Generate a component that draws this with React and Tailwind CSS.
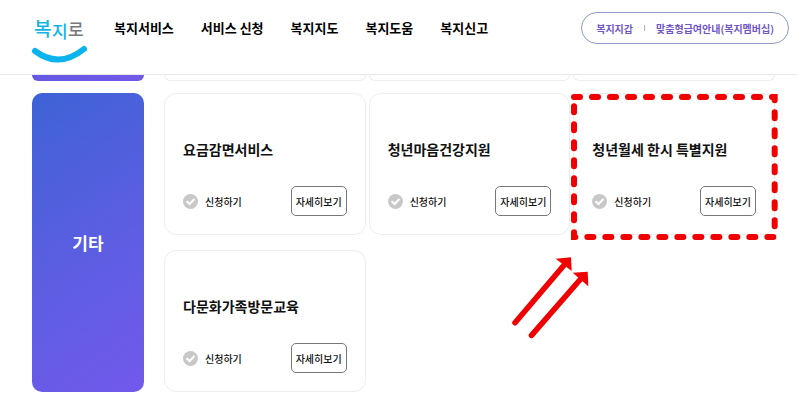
const MENU = ["복지서비스", "서비스 신청", "복지지도", "복지도움", "복지신고"];

const SERVICES = [
  { id: "discount", title: "요금감면서비스" },
  { id: "mind", title: "청년마음건강지원" },
  { id: "rent", title: "청년월세 한시 특별지원", highlighted: true },
  { id: "multicultural", title: "다문화가족방문교육" },
];

export default function App() {
  return (
    <div className="bg-white text-[#111] font-['Noto_Sans_CJK_KR',sans-serif]">
      <Header />
      <main className="pl-8 pr-[22px] pb-2">
        <PreviousCategory />
        <section className="mt-3 flex gap-5">
          <h2 className="flex w-28 shrink-0 items-center justify-center rounded-[10px] bg-linear-145 from-[#3d62d6] to-[#7259ec] text-[17px] font-bold text-white">
            기타
          </h2>
          <div className="grid flex-1 grid-cols-3 gap-x-[3px] gap-y-[15px]">
            {SERVICES.map((service) => (
              <ServiceCard key={service.id} {...service} />
            ))}
          </div>
        </section>
      </main>
    </div>
  );
}

function Header() {
  return (
    <header className="flex h-[75px] items-start border-b border-[#e8e8ea] pl-8 pr-2 pt-3">
      <a href="#home" aria-label="복지로">
        <Logo />
      </a>
      <nav className="ml-[26px] flex h-8 items-center gap-[27px] whitespace-nowrap text-[13px] font-bold text-black">
        {MENU.map((item) => (
          <a key={item} href="#menu">
            {item}
          </a>
        ))}
      </nav>
      <div className="ml-auto flex h-8 items-center gap-[11px] whitespace-nowrap rounded-full border border-[#8d9cc8] px-[14px] text-[10px] font-bold text-[#6f55c8]">
        <a href="#wallet">복지지갑</a>
        <span className="h-[6px] w-px bg-[#b3a9de]" />
        <a href="#membership">맞춤형급여안내(복지멤버십)</a>
      </div>
    </header>
  );
}

function Logo() {
  return (
    <svg viewBox="0 0 56 52" className="h-[52px] w-14">
      <g fill="#12b5ea" fontWeight="500">
        <text x="2" y="24" fontSize="19">
          복
        </text>
        <text x="20" y="26" fontSize="17">
          지
        </text>
        <text x="36" y="24" fontSize="17" fill="#77787b">
          로
        </text>
      </g>
      <path
        d="M3 39Q27 57 52 37"
        fill="none"
        stroke="#0cb4ee"
        strokeWidth="6"
        strokeLinecap="round"
      />
    </svg>
  );
}

// bottom edge of the category above, scrolled under the header
function PreviousCategory() {
  return (
    <div className="flex h-[6px] gap-5">
      <div className="w-28 shrink-0 rounded-b-[10px] bg-linear-to-r from-[#6459e2] to-[#7259e8]" />
      <div className="grid flex-1 grid-cols-3 gap-x-[3px]">
        <div className="rounded-b-xl border border-t-0 border-[#ededed]" />
        <div className="rounded-b-xl border border-t-0 border-[#ededed]" />
        <div className="rounded-b-xl border border-t-0 border-[#ededed]" />
      </div>
    </div>
  );
}

function ServiceCard({ id, title, highlighted }) {
  return (
    <article className="relative rounded-xl border border-[#ededed] px-[18px] pb-[18px] pt-11">
      <h3 className="whitespace-nowrap text-[14px] leading-[22px] font-bold">
        {title}
      </h3>
      <div className="mt-[26px] flex items-center justify-between text-[10px] font-medium">
        <label htmlFor={id} className="flex items-center gap-[7px]">
          <span className="grid">
            <input
              id={id}
              type="checkbox"
              className="col-start-1 row-start-1 size-[15px] appearance-none rounded-full bg-[#c8c8c8]"
            />
            <svg
              viewBox="0 0 15 15"
              className="pointer-events-none col-start-1 row-start-1 size-[15px]"
            >
              <path
                d="M3.6 7.2L6.6 10L11.4 5"
                fill="none"
                stroke="#fff"
                strokeWidth="2"
              />
            </svg>
          </span>
          신청하기
        </label>
        <button
          type="button"
          className="h-[30px] w-14 whitespace-nowrap rounded-[5px] border border-[#777]"
        >
          자세히보기
        </button>
      </div>
      {highlighted && <Highlight />}
    </article>
  );
}

function Highlight() {
  return (
    <div className="pointer-events-none absolute -bottom-[3px] -right-px left-0 top-[3px]">
      <svg className="size-full overflow-visible">
        <rect
          width="100%"
          height="100%"
          fill="none"
          stroke="#f00000"
          strokeWidth="6"
          strokeLinecap="round"
          strokeDasharray="6 12"
        />
      </svg>
      <svg
        viewBox="0 0 80 86"
        className="absolute -left-[62px] top-[158px] h-[86px] w-20"
      >
        <g fill="#f00000" stroke="#f00000" strokeLinecap="round">
          <path d="M3 67.7L53 9" strokeWidth="5.6" />
          <path d="M59 2.3L43.7 3.7L59.7 16Z" stroke="none" />
          <path d="M19.5 80.3L69.5 23" strokeWidth="5.6" />
          <path d="M75.7 16.7L60.7 17.7L76.3 31.3Z" stroke="none" />
        </g>
      </svg>
    </div>
  );
}
